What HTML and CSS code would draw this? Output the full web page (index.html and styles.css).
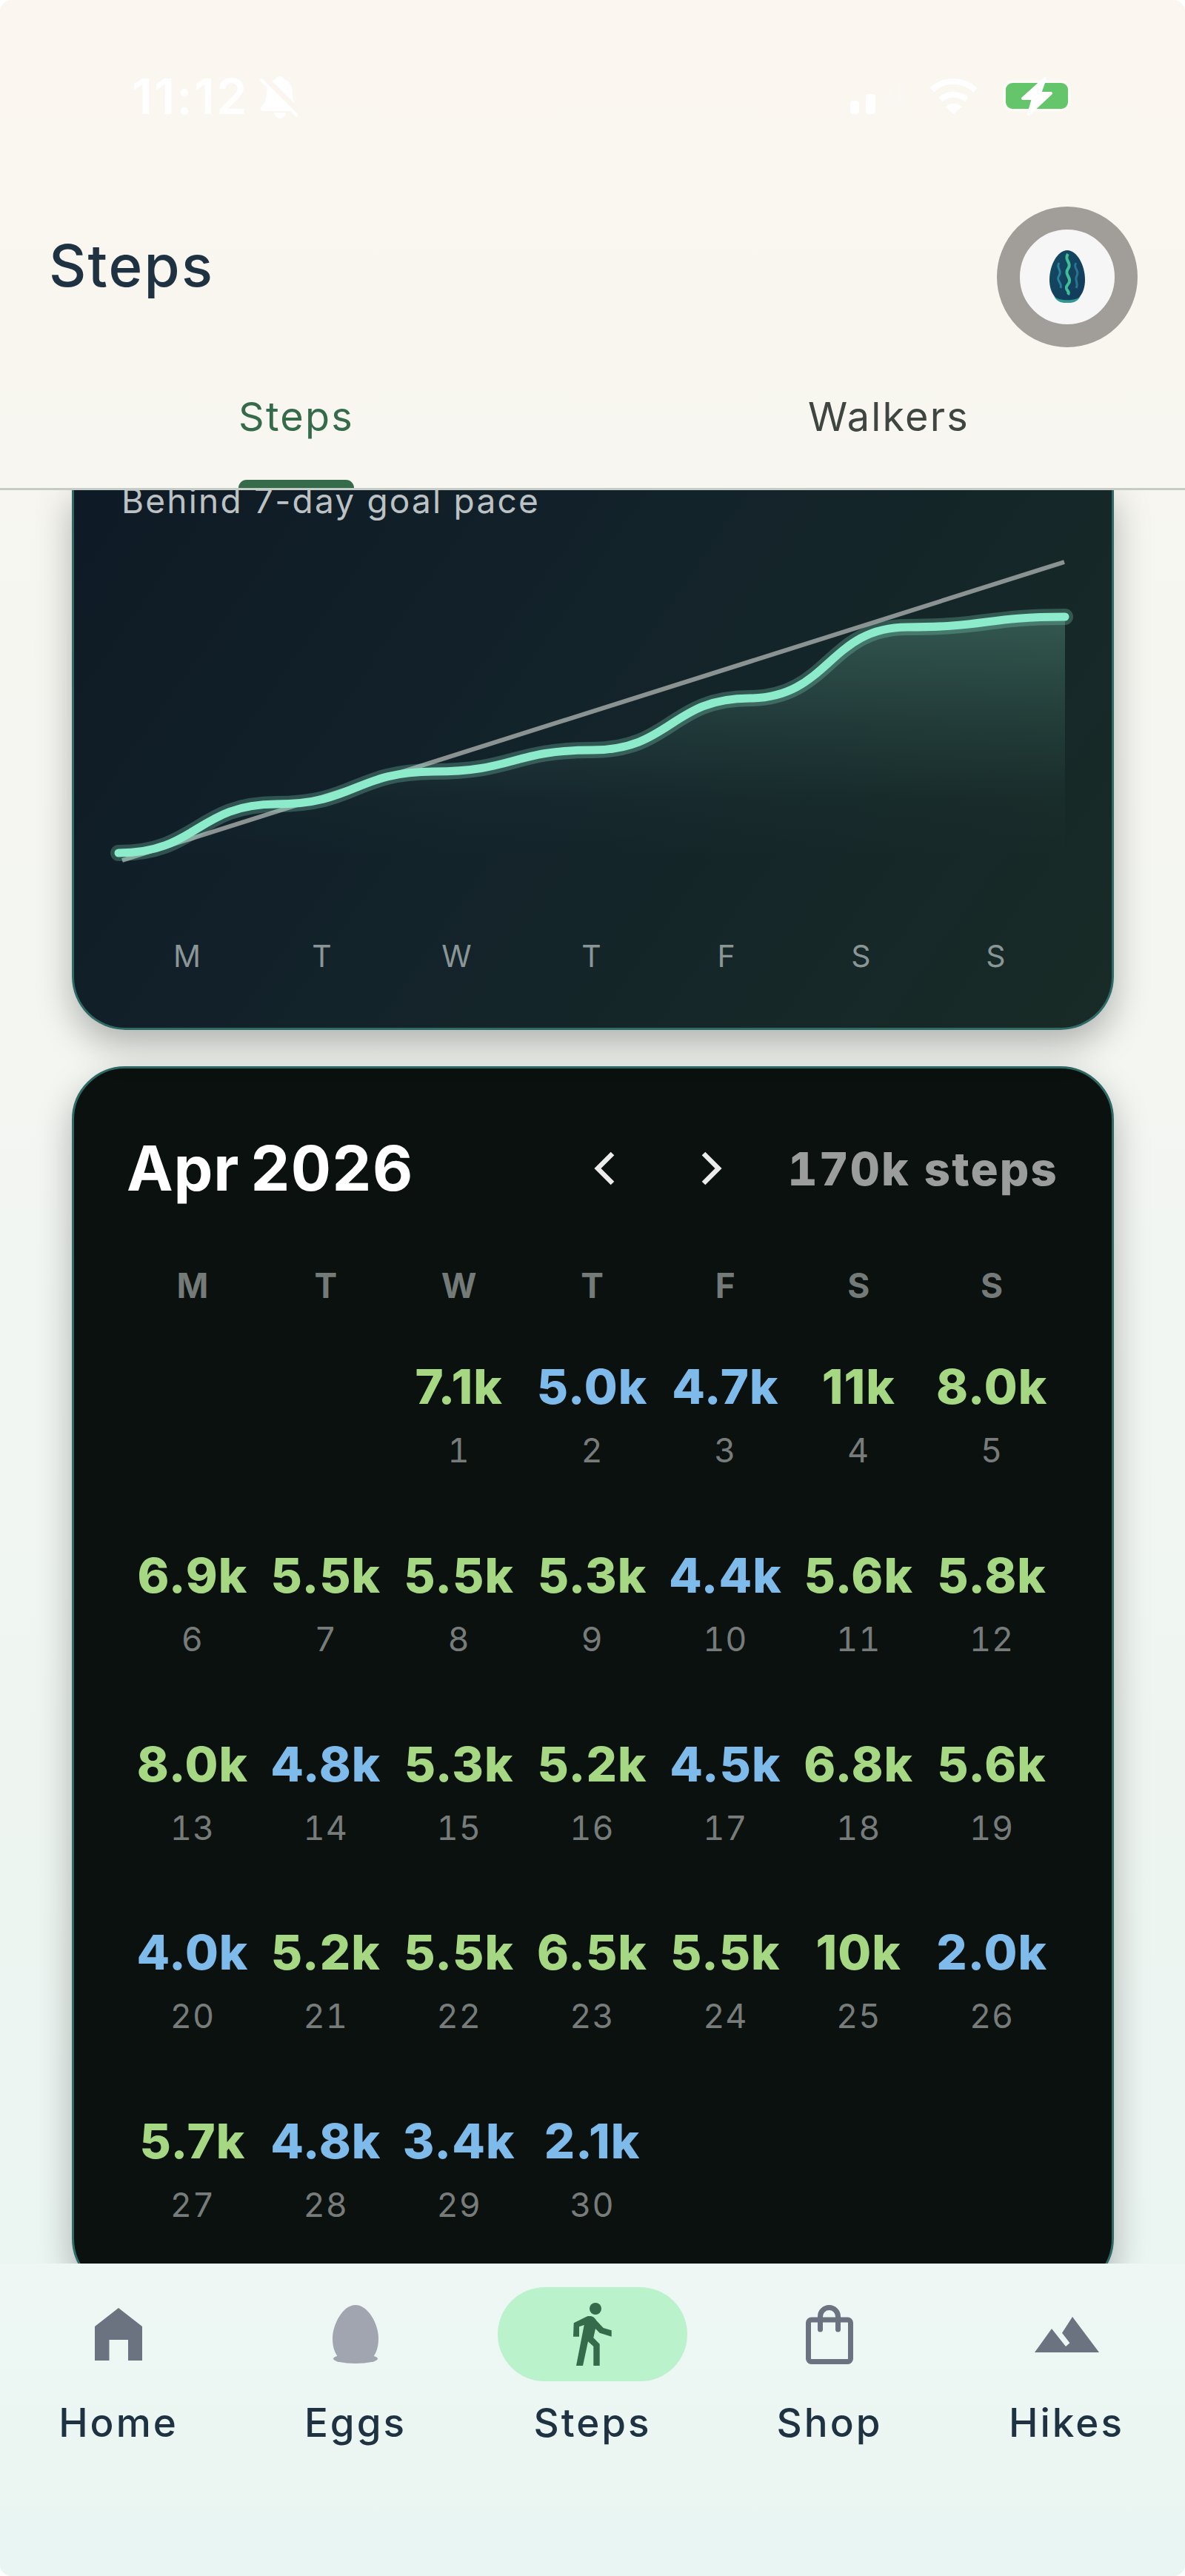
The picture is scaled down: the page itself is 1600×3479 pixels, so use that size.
FILE: index.html
```html
<!DOCTYPE html>
<html lang="en">
<head>
<meta charset="utf-8">
<title>Steps</title>
<link rel="stylesheet" href="styles.css">
</head>
<body>
<div class="app">
  <header class="top">
    <div class="status">
      <div class="status-left">
        <span class="time">11:12</span>
        <svg class="bell" viewBox="0 0 52 57"><path fill="#fff" d="M27 0c-3 0-5 2-6 4-8 3-12 10-12 19 0 8-3 13-7 18-2 3-1 6 2 6h44c3 0 4-3 2-6-4-5-6-10-6-18 0-9-4-16-11-19-1-2-3-4-6-4z"/><path fill="#fff" d="M19 49c1 5 4 8 8 8s7-3 8-8z"/><path d="M4 1l50 50" stroke="#fbf5ef" stroke-width="10"/><path d="M1 4l50 50" stroke="#fff" stroke-width="4"/></svg>
      </div>
      <div class="status-right">
        <svg class="signal" viewBox="0 0 75 46"><rect x="0" y="28" width="12" height="18" rx="4" fill="#fff"/><rect x="21" y="19" width="13" height="27" rx="4" fill="#fff"/><rect x="44" y="9" width="12" height="37" rx="4" fill="#fff" opacity=".14"/><rect x="63" y="0" width="12" height="46" rx="4" fill="#fff" opacity=".14"/></svg>
        <svg class="wifi" viewBox="0 0 66 50"><path d="M3 17C20 1 46 1 63 17" fill="none" stroke="#fff" stroke-width="8"/><path d="M15 30c11-9 25-9 36 0" fill="none" stroke="#fff" stroke-width="8"/><path d="M22 40c7-6 15-6 22 0L33 50z" fill="#fff"/></svg>
        <svg class="battery" viewBox="0 0 100 56"><rect x="8" y="10" width="84" height="35" rx="9" fill="#64c56a" stroke="#fff" stroke-opacity=".45" stroke-width="8" paint-order="stroke"/><path d="M61 4 31 31h14l-6 21 30-28H54z" fill="#fff" stroke="#fff" stroke-width="4" stroke-linejoin="round"/></svg>
      </div>
    </div>
    <div class="title-row">
      <h1 class="title">Steps</h1>
      <div class="avatar">
        <svg class="egg" viewBox="0 0 48 72">
          <defs>
            <linearGradient id="eggfill" x1="0" y1="0" x2="1" y2="1"><stop offset="0" stop-color="#144a63"/><stop offset="1" stop-color="#123a5a"/></linearGradient>
          </defs>
          <path d="M24 0C11 0 0 20 0 40c0 18 10 31 24 31s24-13 24-31C48 20 37 0 24 0z" fill="url(#eggfill)"/>
          <path d="M25 5c-6 8 6 12 0 20s7 13 0 21 4 8 0 14" fill="none" stroke="#3fbf95" stroke-width="4"/>
          <path d="M13 17c-5 7 5 10 0 17s5 10 2 17" fill="none" stroke="#2a7f99" stroke-width="3"/>
          <path d="M36 17c-5 7 5 10 1 17s3 10-1 17" fill="none" stroke="#27748f" stroke-width="3"/>
          <path d="M6 62c6 7 30 7 36 0-5 9-12 9-18 9S11 71 6 62z" fill="#2f9a93"/>
        </svg>
      </div>
    </div>
    <nav class="tabs">
      <div class="tab tab-active"><span class="tab-label">Steps<i class="tab-bar"></i></span></div>
      <div class="tab"><span class="tab-label">Walkers</span></div>
    </nav>
  </header>

  <main class="scroll">
    <section class="card chart-card">
      <p class="pace">Behind 7-day goal pace</p>
      <svg class="chart" viewBox="100 654 1401 732" preserveAspectRatio="none">
        <defs>
          <linearGradient id="area" x1="0" y1="0" x2="0" y2="1">
            <stop offset="0" stop-color="#8be8c6" stop-opacity=".25"/>
            <stop offset=".45" stop-color="#8be8c6" stop-opacity=".1"/>
            <stop offset=".75" stop-color="#8be8c6" stop-opacity=".02"/>
            <stop offset="1" stop-color="#8be8c6" stop-opacity="0"/>
          </linearGradient>
        </defs>
        <path fill="url(#area)" d="M160 1150C266 1150 267 1084 373 1084C480 1084 480 1040 586 1040C693 1040 693 1011 799 1011C906 1011 906 941 1012 941C1119 941 1119 845 1225 845C1332 845 1332 831 1438 831V1160H160Z"/>
        <path d="M165 1160 1437 757" stroke="#8a9292" stroke-width="6" fill="none"/>
        <path d="M160 1150C266 1150 267 1084 373 1084C480 1084 480 1040 586 1040C693 1040 693 1011 799 1011C906 1011 906 941 1012 941C1119 941 1119 845 1225 845C1332 845 1332 831 1438 831" fill="none" stroke="#8cebca" stroke-opacity=".25" stroke-width="22" stroke-linecap="round"/>
        <path d="M160 1150C266 1150 267 1084 373 1084C480 1084 480 1040 586 1040C693 1040 693 1011 799 1011C906 1011 906 941 1012 941C1119 941 1119 845 1225 845C1332 845 1332 831 1438 831" fill="none" stroke="#8cebca" stroke-width="11" stroke-linecap="round"/>
      </svg>
      <div class="axis">
        <span>M</span><span>T</span><span>W</span><span>T</span><span>F</span><span>S</span><span>S</span>
      </div>
    </section>

    <section class="card cal-card">
      <div class="cal-head">
        <h2 class="month">Apr 2026</h2>
        <div class="cal-nav">
          <svg class="chev" viewBox="0 0 30 46"><path d="M26 3 6 23l20 20" fill="none" stroke="#ececec" stroke-width="6.5"/></svg>
          <svg class="chev" viewBox="0 0 30 46"><path d="M4 3l20 20L4 43" fill="none" stroke="#ececec" stroke-width="6.5"/></svg>
        </div>
        <span class="total">170k steps</span>
      </div>
      <div class="dow">
        <span>M</span><span>T</span><span>W</span><span>T</span><span>F</span><span>S</span><span>S</span>
      </div>
      <div class="grid">
        <div class="day"></div><div class="day"></div>
        <div class="day"><b class="g">7.1k</b><span>1</span></div>
        <div class="day"><b class="b">5.0k</b><span>2</span></div>
        <div class="day"><b class="b">4.7k</b><span>3</span></div>
        <div class="day"><b class="g">11k</b><span>4</span></div>
        <div class="day"><b class="g">8.0k</b><span>5</span></div>
        <div class="day"><b class="g">6.9k</b><span>6</span></div>
        <div class="day"><b class="g">5.5k</b><span>7</span></div>
        <div class="day"><b class="g">5.5k</b><span>8</span></div>
        <div class="day"><b class="g">5.3k</b><span>9</span></div>
        <div class="day"><b class="b">4.4k</b><span>10</span></div>
        <div class="day"><b class="g">5.6k</b><span>11</span></div>
        <div class="day"><b class="g">5.8k</b><span>12</span></div>
        <div class="day"><b class="g">8.0k</b><span>13</span></div>
        <div class="day"><b class="b">4.8k</b><span>14</span></div>
        <div class="day"><b class="g">5.3k</b><span>15</span></div>
        <div class="day"><b class="g">5.2k</b><span>16</span></div>
        <div class="day"><b class="b">4.5k</b><span>17</span></div>
        <div class="day"><b class="g">6.8k</b><span>18</span></div>
        <div class="day"><b class="g">5.6k</b><span>19</span></div>
        <div class="day"><b class="b">4.0k</b><span>20</span></div>
        <div class="day"><b class="g">5.2k</b><span>21</span></div>
        <div class="day"><b class="g">5.5k</b><span>22</span></div>
        <div class="day"><b class="g">6.5k</b><span>23</span></div>
        <div class="day"><b class="g">5.5k</b><span>24</span></div>
        <div class="day"><b class="g">10k</b><span>25</span></div>
        <div class="day"><b class="b">2.0k</b><span>26</span></div>
        <div class="day"><b class="g">5.7k</b><span>27</span></div>
        <div class="day"><b class="b">4.8k</b><span>28</span></div>
        <div class="day"><b class="b">3.4k</b><span>29</span></div>
        <div class="day"><b class="b">2.1k</b><span>30</span></div>
      </div>
    </section>
  </main>

  <nav class="bottom">
    <div class="item">
      <div class="icon-wrap"><svg class="icon-home" viewBox="0 0 64 71"><path fill="#6b7280" d="M32 0 64 25V71H45V43H19.500V71H0V25Z"/></svg></div>
      <span class="item-label">Home</span>
    </div>
    <div class="item">
      <div class="icon-wrap"><svg class="icon-egg" viewBox="0 0 62 79"><path fill="#a1a5b0" d="M31 0C14 0 0 26 0 45c0 12 3 20 8 26h46c5-6 8-14 8-26C62 26 48 0 31 0z"/><ellipse cx="31" cy="72.500" rx="30" ry="6.500" fill="#a1a5b0"/></svg></div>
      <span class="item-label">Eggs</span>
    </div>
    <div class="item">
      <div class="icon-wrap icon-pill"><svg class="icon-walk" viewBox="0 0 52 85"><circle cx="30" cy="8" r="8" fill="#356b4b"/><path fill="#356b4b" d="M.7 27.300 0 45.700H8V32.300L14.700 30 4 85H13L20 52.300 27.300 59V85H35.700V55.700L27.300 47.300 30 35 35.700 40.700 51.700 45.700V37.300L40.700 34 31.300 24C29 20 26 17 19 18.300Z"/></svg></div>
      <span class="item-label">Steps</span>
    </div>
    <div class="item">
      <div class="icon-wrap"><svg class="icon-shop" viewBox="0 0 64 80"><rect x="3.500" y="20" width="57" height="56.500" rx="4" fill="none" stroke="#6b7280" stroke-width="7"/><path d="M19.500 33V15.500a12 12 0 0 1 24 0V33" fill="none" stroke="#6b7280" stroke-width="7" stroke-linecap="round"/></svg></div>
      <span class="item-label">Shop</span>
    </div>
    <div class="item">
      <div class="icon-wrap"><svg class="icon-hike" viewBox="0 0 87 48"><path fill="#6b7280" d="M51 0 87 48H0L23 16 42 40 47.400 35.300 37 21.700Z"/></svg></div>
      <span class="item-label">Hikes</span>
    </div>
  </nav>
</div>
</body>
</html>
```
FILE: styles.css
```css
* { box-sizing: border-box; }
html, body { margin: 0; padding: 0; background: #fff; }
body { font-family: Inter, "Liberation Sans", sans-serif; }
.app {
  width: 1600px;
  height: 3479px;
  display: flex;
  flex-direction: column;
  overflow: hidden;
  border-radius: 16px;
  background: linear-gradient(180deg, #f8f6f0 0%, #f6f6f1 25%, #e9f5f2 100%);
}

/* header */
.top {
  flex: none;
  height: 662px;
  background: linear-gradient(180deg, #fbf6f0 0%, #f8f6f0 100%);
  border-bottom: 3px solid #c5cbc5;
}
.status {
  height: 262px;
  padding: 94px 150px 0 178px;
  display: flex;
  justify-content: space-between;
}
.status-left, .status-right { display: flex; align-items: flex-start; }
.time { font-size: 66px; line-height: 72px; font-weight: 600; color: #fff; letter-spacing: 2.4px; }
.bell { width: 52px; height: 57px; margin: 9px 0 0 15px; }
.signal { width: 75px; height: 46px; margin: 14px 32px 0 0; }
.wifi { width: 65px; height: 49px; margin: 11px 30px 0 0; }
.battery { width: 100px; height: 56px; margin: 8px 0 0 0; }

.title-row {
  height: 207px;
  padding: 0 64px 0 66px;
  display: flex;
  justify-content: space-between;
  align-items: flex-start;
}
.title { margin: 52px 0 0; font-size: 78px; font-weight: 500; color: #1e3242; letter-spacing: 2.2px; line-height: 90px; }
.avatar {
  width: 190px;
  height: 190px;
  margin-top: 17px;
  flex: none;
  border-radius: 50%;
  border: 31px solid #a19e9a;
  background: #f6f6f6;
  display: flex;
  align-items: center;
  justify-content: center;
}
.egg { width: 48px; height: 72px; }
.tabs { display: flex; height: 190px; }
.tab { flex: 1; display: flex; justify-content: center; align-items: flex-end; }
.tab-label {
  position: relative;
  font-size: 54px;
  line-height: 64px;
  font-weight: 400;
  color: #3f4540;
  letter-spacing: 2.2px;
  padding-bottom: 64px;
}
.tab-active .tab-label { color: #356b4b; }
.tab-bar {
  position: absolute;
  left: 0;
  right: 0;
  bottom: 0;
  height: 11px;
  background: #356b4b;
  border-radius: 11px 11px 0 0;
}

/* scroll area */
.scroll { flex: 1; min-height: 0; overflow: hidden; padding: 0 96px 0 97px; }
.card {
  border: 3px solid #2f6a66;
  border-radius: 72px;
  box-shadow: 0 20px 48px rgba(0, 0, 0, .28);
}
.chart-card {
  height: 735px;
  border-top: 0;
  border-radius: 0 0 72px 72px;
  padding-left: 64px;
  background: linear-gradient(125deg, #0e1a25 0%, #13232a 45%, #182b26 100%);
  position: relative;
}
.pace { margin: -6px 0 0; font-size: 46px; line-height: 40px; color: #bcc1c3; letter-spacing: 2.2px; font-weight: 400; }
.chart { position: absolute; left: 0; top: 0; width: 100%; height: 100%; }
.axis {
  position: absolute;
  left: 0;
  right: 0;
  top: 611px;
  padding: 0 0 0 62px;
  display: grid;
  grid-template-columns: repeat(7, 182px);
  text-align: center;
  font-size: 41px;
  line-height: 48px;
  color: #8a9596;
  letter-spacing: 1px;
}

.cal-card {
  height: 1655px;
  margin-top: 49px;
  background: #0a110f;
  padding: 85px 72px 0 70px;
}
.cal-head { display: flex; align-items: center; height: 100px; }
.month { margin: 0 0 0 1px; font-size: 84px; line-height: 100px; font-weight: 700; color: #fff; letter-spacing: .8px; word-spacing: -9px; flex: none; width: 630px; font-variant-numeric: tabular-nums; }
.cal-nav { display: flex; gap: 115px; }
.chev { width: 30px; height: 46px; display: block; }
.total { font-size: 62px; font-weight: 800; color: #9a9d9b; margin-left: auto; white-space: nowrap; letter-spacing: 2.1px; font-variant-numeric: tabular-nums; }
.dow {
  display: grid;
  grid-template-columns: repeat(7, 1fr);
  margin-top: 83px;
  text-align: center;
  font-size: 46px;
  line-height: 50px;
  font-weight: 700;
  color: #747a78;
}
.grid {
  display: grid;
  grid-template-columns: repeat(7, 1fr);
  grid-auto-rows: 254.8px;
  margin-top: 74px;
}
.day { display: flex; flex-direction: column; align-items: center; }
.day b { font-size: 65px; line-height: 76px; font-weight: 800; letter-spacing: 1px; white-space: nowrap; }
.day span { font-size: 45px; line-height: 56px; margin-top: 20px; color: #777c7b; letter-spacing: 1px; font-variant-numeric: tabular-nums; }
.g { color: #a6d883; }
.b { color: #7fbbea; }

/* bottom nav */
.bottom {
  flex: none;
  height: 422px;
  background: linear-gradient(180deg, #eef7f4 0%, #e9f5f2 100%);
  display: grid;
  grid-template-columns: repeat(5, 1fr);
  padding-top: 32px;
}
.item { display: flex; flex-direction: column; align-items: center; }
.icon-wrap { width: 256px; height: 127px; display: flex; align-items: center; justify-content: center; border-radius: 64px; }
.icon-pill { background: #b9f2cb; }
.icon-home { width: 64px; height: 71px; }
.icon-egg { width: 62px; height: 79px; }
.icon-walk { width: 52px; height: 85px; }
.icon-shop { width: 64px; height: 80px; }
.icon-hike { width: 87px; height: 48px; }
.item-label { margin-top: 24px; font-size: 53px; line-height: 64px; font-weight: 500; color: #1e3242; letter-spacing: 3px; }
```
